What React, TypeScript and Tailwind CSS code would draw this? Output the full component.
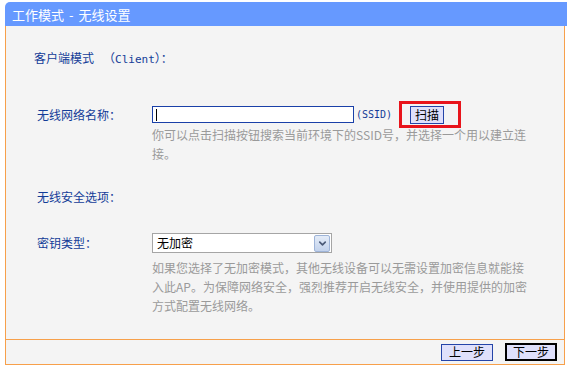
import { ChevronDown } from "lucide-react";

const labelCls = "text-[#133c98] text-[12px] leading-[16px]";
const hintCls = "text-[#9a9a9a] text-[12px] leading-[19px] w-[376px]";

export default function App() {
  return (
    <div className="w-[567px] h-[368px] bg-white pt-[2px] pl-[5px] font-['Noto_Sans_CJK_SC',sans-serif] text-[12px]">
      <div className="w-[562px]">
        {/* title bar */}
        <div className="h-[24px] bg-[#6699ff] rounded-tl-[5px] flex items-center pl-[7px] text-white text-[13px] leading-none">
          <span>工作模式</span>
          <span className="mx-[5px]">-</span>
          <span>无线设置</span>
        </div>

        {/* body */}
        <div className="w-[560px] h-[313px] bg-[#f4f4f4] border-x border-[#f7a04b] flex flex-col">
          <div className={`${labelCls} mt-[24px] pl-[28px] flex`}>
            <span>客户端模式</span>
            <span className="ml-[9px]">（<span className="font-['DejaVu_Sans_Mono',monospace] text-[11px]">Client</span>）：</span>
          </div>

          <div className="flex items-center mt-[33px] pl-[31px] h-[27px]">
            <div className={`${labelCls} w-[115px]`}>无线网络名称：</div>
            <div className="w-[202px] h-[17px] border-[1.5px] border-[#1a40a8] bg-white flex items-center pl-[3px]">
              <div className="w-[1px] h-[12px] bg-black" />
            </div>
            <span className="ml-[2px] text-[#133c98] font-['DejaVu_Sans_Mono',monospace] text-[10px]">
              (SSID)
            </span>
            <div className="ml-[7px] w-[62px] h-[27px] border-[3px] border-[#e8141b] flex items-center pl-[8px]">
              <button className="w-[34px] h-[18px] bg-[#dfe0fb] border border-[#2444a8] text-black text-[12px] leading-none flex items-center justify-center">
                扫描
              </button>
            </div>
          </div>

          <p className={`${hintCls} ml-[146px] mt-[-3px]`}>
            你可以点击扫描按钮搜索当前环境下的SSID号，并选择一个用以建立连接。
          </p>

          <div className={`${labelCls} mt-[26px] pl-[31px]`}>无线安全选项：</div>

          <div className="flex items-center mt-[28px] pl-[31px] h-[20px]">
            <div className={`${labelCls} w-[115px]`}>密钥类型：</div>
            <div className="w-[180px] h-[20px] border border-[#a5a5a5] bg-white flex items-center justify-between">
              <span className="pl-[4px] text-black text-[12px]">无加密</span>
              <span className="w-[16px] h-[17px] mr-[1px] rounded-[2px] border border-[#9eb4d8] bg-gradient-to-b from-[#e4ecf8] to-[#c2d2ec] flex items-center justify-center">
                <ChevronDown size={11} strokeWidth={3.5} color="#4a5a78" />
              </span>
            </div>
          </div>

          <p className={`${hintCls} ml-[146px] mt-[5px]`}>
            如果您选择了无加密模式，其他无线设备可以无需设置加密信息就能接入此AP。为保障网络安全，强烈推荐开启无线安全，并使用提供的加密方式配置无线网络。
          </p>
        </div>

        {/* footer */}
        <div className="w-[560px] h-[26px] bg-[#f4f4f4] border border-[#f7a04b] flex items-center justify-end gap-[12px] pr-[7px]">
          <button className="w-[52px] h-[17px] bg-[#dfe0fb] border border-[#2444a8] text-black text-[12px] leading-none flex items-center justify-center">
            上一步
          </button>
          <button className="w-[52px] h-[18px] bg-[#dfe0fb] border-2 border-black text-black text-[12px] leading-none flex items-center justify-center">
            下一步
          </button>
        </div>
      </div>
    </div>
  );
}
